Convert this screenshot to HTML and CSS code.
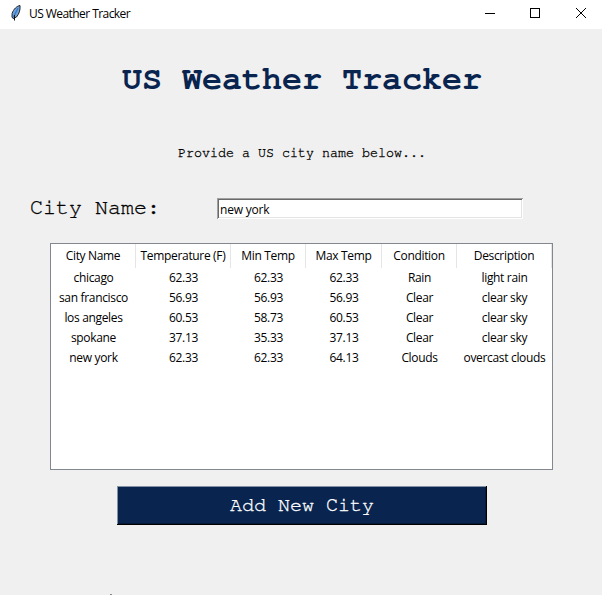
FILE: index.html
```html
<!DOCTYPE html>
<html lang="en">
<head>
<meta charset="utf-8">
<title>US Weather Tracker</title>
<link rel="stylesheet" href="styles.css">
</head>
<body>
<header class="titlebar">
  <svg class="feather" width="12" height="16" viewBox="0 0 12 16">
    <path d="M10 .5C7 1 3.500 4 2.100 8.500L2 12l1 1.500L6.500 12C9 9 10.500 5 10 .5Z" fill="#6fa3df" stroke="#222" stroke-width="1"/>
    <path d="M8 3 3.500 12" stroke="#3a78c4" stroke-width="1.4"/>
    <path d="M4.500 10v5.500" fill="none" stroke="#111" stroke-width="1"/>
  </svg>
  <span class="caption">US Weather Tracker</span>
  <svg class="controls" width="138" height="29" viewBox="0 0 138 29" fill="none" stroke="#000" stroke-width="1">
    <path d="M21 13.500h10M66.500 8.500h9v9h-9z" shape-rendering="crispEdges"/>
    <path d="m112 8 10 10M122 8l-10 10" stroke-width="1"/>
  </svg>
</header>
<main>
  <h1>US Weather Tracker</h1>
  <p class="hint">Provide a US city name below...</p>
  <div class="entry">
    <label for="city">City Name:</label>
    <input id="city" type="text" value="new york">
  </div>
  <table>
    <thead><tr><th class="w85">City Name</th><th class="w95">Temperature (F)</th><th class="w75">Min Temp</th><th class="w76">Max Temp</th><th class="w75">Condition</th><th class="w95">Description</th></tr></thead>
    <tbody>
      <tr><td>chicago</td><td>62.33</td><td>62.33</td><td>62.33</td><td>Rain</td><td>light rain</td></tr>
      <tr><td>san francisco</td><td>56.93</td><td>56.93</td><td>56.93</td><td>Clear</td><td>clear sky</td></tr>
      <tr><td>los angeles</td><td>60.53</td><td>58.73</td><td>60.53</td><td>Clear</td><td>clear sky</td></tr>
      <tr><td>spokane</td><td>37.13</td><td>35.33</td><td>37.13</td><td>Clear</td><td>clear sky</td></tr>
      <tr><td>new york</td><td>62.33</td><td>62.33</td><td>64.13</td><td>Clouds</td><td>overcast clouds</td></tr>
      <tr class="empty"><td colspan="6"></td></tr>
    </tbody>
  </table>
  <button type="button">Add New City</button>
</main>
<i class="speck"></i>
</body>
</html>
```

FILE: styles.css
```css
* { box-sizing: border-box; }
body {
  margin: 0;
  height: 595px;
  overflow: hidden;
  display: flex;
  flex-direction: column;
  background: #f0f0f0;
  color: #000;
  font: 12px/20px "Segoe UI", "Open Sans", sans-serif;
  letter-spacing: -0.33px;
}
.titlebar {
  flex: none;
  height: 29px;
  display: flex;
  align-items: flex-start;
  padding-left: 10px;
  background: #fff;
}
.feather { margin-top: 5px; }
.caption { margin: 4px 0 0 7px; letter-spacing: -0.56px; }
.controls { margin-left: auto; }
main { flex: 1; display: flex; flex-direction: column; }
h1, .hint, label, button {
  font-family: "Nimbus Mono PS", "FreeMono", "Courier New", "Liberation Mono", monospace;
  font-weight: 400;
  letter-spacing: 0;
}
.hint, label, button { -webkit-text-stroke: 0.3px currentColor; }
h1 {
  margin: 30px 0 0 2px;
  text-align: center;
  color: #08244f;
  font-size: 33.33px;
  font-weight: 700;
  line-height: 40px;
}
.hint {
  margin: 44px 0 0 2px;
  text-align: center;
  font-size: 13.33px;
  line-height: 20px;
}
.entry { display: flex; margin: 35px 0 0 30px; height: 20px; }
label { width: 187px; font-size: 21.67px; line-height: 20px; }
input {
  width: 306px;
  height: 21px;
  padding: 1px 1px 0 3px;
  border: 0;
  outline: 0;
  background: #fff;
  box-shadow: inset 1px 1px #a0a0a0, inset -1px -1px #fff, inset 2px 2px #696969, inset -2px -2px #e3e3e3;
  font: inherit;
  letter-spacing: -0.2px;
}
table {
  width: 503px;
  height: 227px;
  margin: 25px 0 0 50px;
  display: block;
  border: 1px solid #828790;
  border-spacing: 0;
  background: #fff;
}
th, td { padding: 0; font-weight: 400; text-align: center; white-space: nowrap; }
th { height: 24px; border-right: 1px solid #e5e5e5; }
td { height: 20px; }
.empty td { height: 100px; }
.w75 { width: 75px; min-width: 75px; }
.w76 { width: 76px; min-width: 76px; }
.w85 { width: 85px; min-width: 85px; }
.w95 { width: 95px; min-width: 95px; }
button {
  width: 370px;
  height: 39px;
  margin: 16px 0 0 117px;
  padding: 0;
  border: 0;
  background: #08244f;
  box-shadow: inset -1px -1px #000, inset 1px 1px #8391a7, inset -2px -2px #041a38;
  color: #fff;
  font-size: 20px;
  line-height: 39px;
}
.speck { width: 2px; height: 1px; margin-left: 110px; background: #888; }
```
